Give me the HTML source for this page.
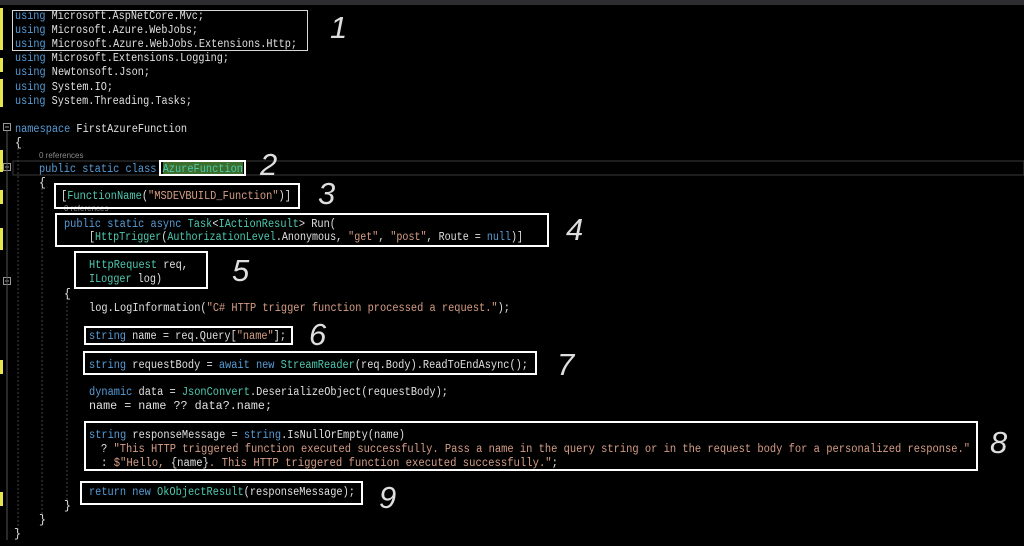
<!DOCTYPE html>
<html><head><meta charset="utf-8"><style>
html,body{margin:0;padding:0;background:#000;width:1024px;height:546px;overflow:hidden}
svg{display:block}
text{font-family:"Liberation Mono","DejaVu Sans Mono",monospace;font-size:11.5px}
.k{fill:#569cd6}.t{fill:#4ec9b0}.s{fill:#d69d85}.d{fill:#e0e0e0}.g{fill:#8a8a8a}
.n{font-family:"Liberation Sans",sans-serif;font-size:31px;font-style:italic;fill:#dedede}
</style></head><body>
<svg width="1024" height="546" xmlns="http://www.w3.org/2000/svg">
<rect width="1024" height="546" fill="#000"/>
<rect width="1024" height="5" fill="#2d2d30"/>
<g fill="#e6e64c">
<rect x="0" y="8" width="3" height="42"/><rect x="0" y="58" width="3" height="14"/><rect x="0" y="79" width="3" height="28"/>
<rect x="0" y="150" width="3" height="22"/><rect x="0" y="190" width="3" height="14"/><rect x="0" y="228" width="3" height="22"/>
<rect x="0" y="360" width="3" height="14"/><rect x="0" y="492" width="3" height="14"/>
</g>
<rect x="13" y="161" width="1011" height="14" fill="none" stroke="#3a3a3a"/>
<g fill="none" stroke="#999"><rect x="3.5" y="123.5" width="7" height="7"/><rect x="3.5" y="163.5" width="7" height="7"/><rect x="3.5" y="277.5" width="7" height="7"/></g>
<g stroke="#999"><line x1="5" y1="127" x2="9" y2="127"/><line x1="5" y1="167" x2="9" y2="167"/><line x1="5" y1="281" x2="9" y2="281"/>
<line x1="7" y1="131" x2="7" y2="540" stroke="#555"/></g>
<g stroke="#444" stroke-dasharray="2,2"><line x1="18" y1="148" x2="18" y2="530"/><line x1="42" y1="188" x2="42" y2="515"/><line x1="67" y1="298" x2="67" y2="500"/></g>
<rect x="163" y="162" width="80" height="12" fill="#3c6e2c"/>
<text x="15" y="19" textLength="189" lengthAdjust="spacingAndGlyphs"><tspan class="k">using</tspan><tspan class="d"> Microsoft.AspNetCore.Mvc;</tspan></text>
<text x="15" y="33" textLength="183" lengthAdjust="spacingAndGlyphs"><tspan class="k">using</tspan><tspan class="d"> Microsoft.Azure.WebJobs;</tspan></text>
<text x="15" y="47" textLength="282" lengthAdjust="spacingAndGlyphs"><tspan class="k">using</tspan><tspan class="d"> Microsoft.Azure.WebJobs.Extensions.Http;</tspan></text>
<text x="15" y="61" textLength="214" lengthAdjust="spacingAndGlyphs"><tspan class="k">using</tspan><tspan class="d"> Microsoft.Extensions.Logging;</tspan></text>
<text x="15" y="75" textLength="135" lengthAdjust="spacingAndGlyphs"><tspan class="k">using</tspan><tspan class="d"> Newtonsoft.Json;</tspan></text>
<text x="15" y="90" textLength="98" lengthAdjust="spacingAndGlyphs"><tspan class="k">using</tspan><tspan class="d"> System.IO;</tspan></text>
<text x="15" y="104" textLength="177" lengthAdjust="spacingAndGlyphs"><tspan class="k">using</tspan><tspan class="d"> System.Threading.Tasks;</tspan></text>
<text x="15" y="132" textLength="172" lengthAdjust="spacingAndGlyphs"><tspan class="k">namespace</tspan><tspan class="d"> FirstAzureFunction</tspan></text>
<text x="15" y="146" class="d">{</text>
<text x="39" y="158" class="g" style="font-family:'Liberation Sans',sans-serif;font-size:8px">0 references</text>
<text x="39" y="172" textLength="204" lengthAdjust="spacingAndGlyphs"><tspan class="k">public static class </tspan><tspan class="t">AzureFunction</tspan></text>
<text x="39" y="186" class="d">{</text>
<text x="61" y="199" textLength="230" lengthAdjust="spacingAndGlyphs"><tspan class="d">[</tspan><tspan class="t">FunctionName</tspan><tspan class="d">(</tspan><tspan class="s">"MSDEVBUILD_Function"</tspan><tspan class="d">)]</tspan></text>
<text x="64" y="211" class="g" style="font-family:'Liberation Sans',sans-serif;font-size:8px">0 references</text>
<text x="64" y="227" textLength="272" lengthAdjust="spacingAndGlyphs"><tspan class="k">public static async </tspan><tspan class="t">Task</tspan><tspan class="d">&lt;</tspan><tspan class="t">IActionResult</tspan><tspan class="d">&gt; Run(</tspan></text>
<text x="89" y="240" textLength="434" lengthAdjust="spacingAndGlyphs"><tspan class="d">[</tspan><tspan class="t">HttpTrigger</tspan><tspan class="d">(</tspan><tspan class="t">AuthorizationLevel</tspan><tspan class="d">.Anonymous, </tspan><tspan class="s">"get"</tspan><tspan class="d">, </tspan><tspan class="s">"post"</tspan><tspan class="d">, Route = </tspan><tspan class="k">null</tspan><tspan class="d">)]</tspan></text>
<text x="89" y="268" textLength="99" lengthAdjust="spacingAndGlyphs"><tspan class="t">HttpRequest</tspan><tspan class="d"> req,</tspan></text>
<text x="89" y="282" textLength="73" lengthAdjust="spacingAndGlyphs"><tspan class="t">ILogger</tspan><tspan class="d"> log)</tspan></text>
<text x="64" y="297" class="d">{</text>
<text x="89" y="311" textLength="421" lengthAdjust="spacingAndGlyphs"><tspan class="d">log.LogInformation(</tspan><tspan class="s">"C# HTTP trigger function processed a request."</tspan><tspan class="d">);</tspan></text>
<text x="89" y="339" textLength="197" lengthAdjust="spacingAndGlyphs"><tspan class="k">string</tspan><tspan class="d"> name = req.Query[</tspan><tspan class="s">"name"</tspan><tspan class="d">];</tspan></text>
<text x="89" y="368" textLength="439" lengthAdjust="spacingAndGlyphs"><tspan class="k">string</tspan><tspan class="d"> requestBody = </tspan><tspan class="k">await new </tspan><tspan class="t">StreamReader</tspan><tspan class="d">(req.Body).ReadToEndAsync();</tspan></text>
<text x="89" y="395" textLength="359" lengthAdjust="spacingAndGlyphs"><tspan class="k">dynamic</tspan><tspan class="d"> data = </tspan><tspan class="t">JsonConvert</tspan><tspan class="d">.DeserializeObject(requestBody);</tspan></text>
<text x="89" y="409" textLength="183" lengthAdjust="spacingAndGlyphs" class="d">name = name ?? data?.name;</text>
<text x="89" y="438" textLength="316" lengthAdjust="spacingAndGlyphs"><tspan class="k">string</tspan><tspan class="d"> responseMessage = </tspan><tspan class="k">string</tspan><tspan class="d">.IsNullOrEmpty(name)</tspan></text>
<text x="101" y="452" textLength="869" lengthAdjust="spacingAndGlyphs"><tspan class="d">? </tspan><tspan class="s">"This HTTP triggered function executed successfully. Pass a name in the query string or in the request body for a personalized response."</tspan></text>
<text x="101" y="466" textLength="457" lengthAdjust="spacingAndGlyphs"><tspan class="d">: </tspan><tspan class="s">$"Hello, </tspan><tspan class="d">{name}</tspan><tspan class="s">. This HTTP triggered function executed successfully."</tspan><tspan class="d">;</tspan></text>
<text x="89" y="495" textLength="266" lengthAdjust="spacingAndGlyphs"><tspan class="k">return new </tspan><tspan class="t">OkObjectResult</tspan><tspan class="d">(responseMessage);</tspan></text>
<text x="64" y="509" class="d">}</text>
<text x="39" y="523" class="d">}</text>
<text x="14" y="537" class="d">}</text>
<rect x="12.5" y="10.5" width="295" height="40" fill="none" stroke="#d8d8d8" stroke-width="1"/>
<g fill="none" stroke="#fff" stroke-width="2">
<rect x="160" y="161" width="85" height="14"/>
<rect x="55" y="184" width="244" height="24"/>
<rect x="56" y="214" width="492" height="32"/>
<rect x="75" y="252" width="132" height="36"/>
<rect x="85" y="327" width="207" height="17"/>
<rect x="84" y="352" width="452" height="22"/>
<rect x="85" y="422" width="892" height="48"/>
<rect x="81" y="482" width="281" height="22"/>
</g>
<text class="n" x="330" y="38">1</text>
<text class="n" x="260" y="175">2</text>
<text class="n" x="318" y="204">3</text>
<text class="n" x="566" y="240">4</text>
<text class="n" x="232" y="281">5</text>
<text class="n" x="309" y="345">6</text>
<text class="n" x="557" y="375">7</text>
<text class="n" x="990" y="453">8</text>
<text class="n" x="379" y="508">9</text>
</svg>
</body></html>
